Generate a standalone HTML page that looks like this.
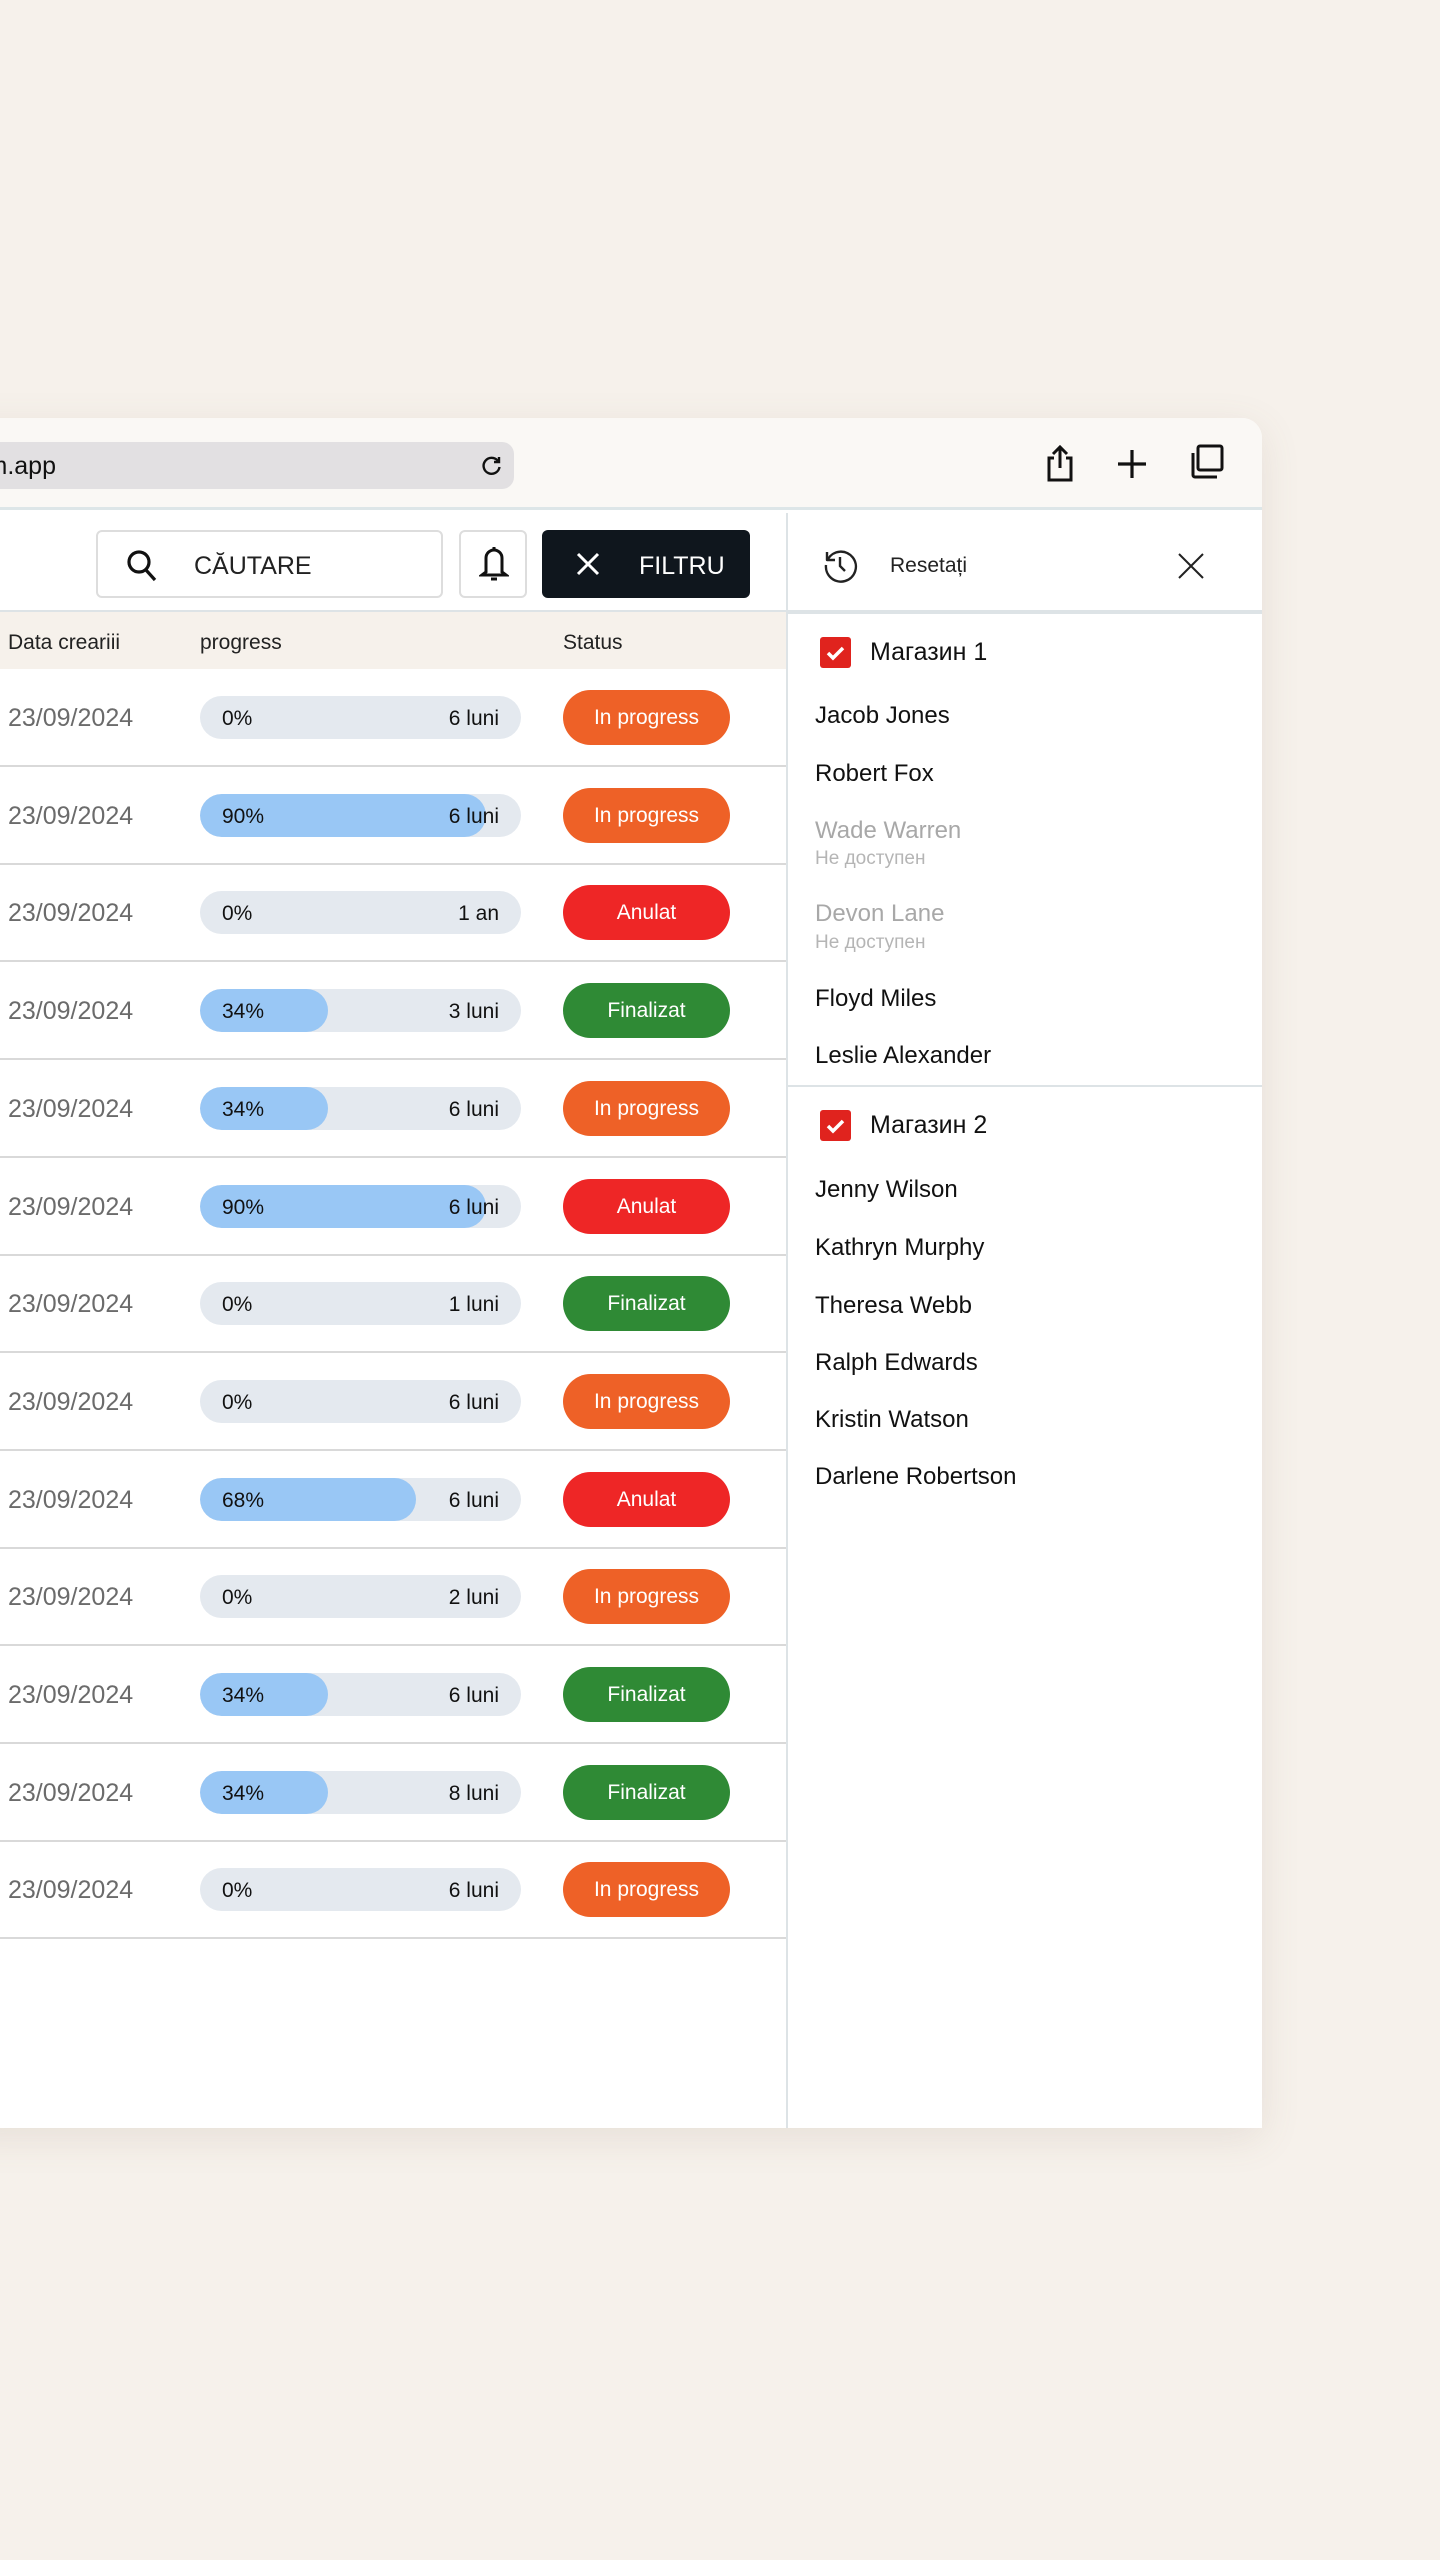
<!DOCTYPE html>
<html><head><meta charset="utf-8"><style>
*{box-sizing:border-box;margin:0;padding:0}
body{width:1440px;height:2560px;background:#f6f1eb;font-family:"Liberation Sans",sans-serif;position:relative;overflow:hidden;color:#111}
.win{position:absolute;left:-40px;top:418px;width:1302px;height:1710px;background:#fff;border-radius:0 20px 0 0;box-shadow:0 10px 40px rgba(120,100,80,.12);overflow:hidden}
.tb{position:absolute;left:0;top:0;width:100%;height:92px;background:#faf8f5;border-bottom:3px solid #dde6e8}
.url{position:absolute;left:0;top:24px;width:554px;height:47px;background:#e2e0e2;border-radius:12px}
.url span{position:absolute;left:14px;top:10px;font-size:25px;color:#111}
.abs{position:absolute}
.search{left:136px;top:112px;width:347px;height:68px;border:2px solid #ddd;border-radius:6px}
.bell{left:499px;top:112px;width:68px;height:68px;border:2px solid #ddd;border-radius:6px}
.filt{left:582px;top:112px;width:208px;height:68px;background:#0f161d;border-radius:6px;color:#fff}
.vline{left:826px;top:95px;width:2px;height:1620px;background:#dde3e6}
.hline{height:2px;background:#dde3e6}
.thead{left:0;top:194px;width:826px;height:57px;background:#f6f1eb;font-size:21px;color:#222}
.row{position:absolute;left:0;width:826px;height:98px;border-bottom:2px solid #d9d9d9}
.date{position:absolute;left:48px;top:35px;font-size:25px;color:#6b6b6b}
.bar{position:absolute;left:240px;top:27px;width:321px;height:43px;background:#e4e9ef;border-radius:22px;overflow:hidden}
.fill{position:absolute;left:0;top:0;height:43px;background:#99c7f5;border-radius:22px}
.bar .p{position:absolute;left:22px;top:11px;font-size:21px;color:#111}
.bar .d{position:absolute;right:22px;top:11px;font-size:21px;color:#111}
.pill{position:absolute;left:603px;top:21px;width:167px;height:55px;border-radius:28px;color:#fff;font-size:21px;text-align:center;line-height:55px}
.o{background:#ee6127}.r{background:#ee2626}.g{background:#2f8a35}
.nm{position:absolute;left:815px;font-size:24px;color:#111}
.dis{color:#a8a8a8}.sub{position:absolute;left:815px;font-size:19px;color:#b5b5b5}
.cb{position:absolute;left:820px;width:31px;height:31px;background:#e0231e;border-radius:3px}
.cb svg{display:block}
</style></head><body>
<div class="win">
 <div class="tb">
  <div class="url"><span>ym.app</span>
   <svg class="abs" style="left:520px;top:12px" width="24" height="24" viewBox="0 0 24 24" fill="none" stroke="#111" stroke-width="2.4"><path d="M18 7a8 8 0 1 0 1.5 6"/><path d="M19 3v5h-5" fill="none"/></svg>
  </div>
  <svg class="abs" style="left:1084px;top:26px" width="32" height="40" viewBox="0 0 32 40" fill="none" stroke="#111" stroke-width="3"><path d="M10 14H5v22h22V14h-5"/><path d="M16 24V3M9 10l7-7 7 7"/></svg>
  <svg class="abs" style="left:1156px;top:30px" width="32" height="32" viewBox="0 0 32 32" stroke="#111" stroke-width="3.2"><path d="M16 2v28M2 16h28"/></svg>
  <svg class="abs" style="left:1228px;top:26px" width="36" height="36" viewBox="0 0 36 36" fill="none" stroke="#111" stroke-width="3"><rect x="10" y="2" width="24" height="24" rx="2"/><path d="M5 9v22a2 2 0 0 0 2 2h22"/></svg>
 </div>
 <div class="abs search">
  <svg class="abs" style="left:28px;top:17px" width="34" height="34" viewBox="0 0 34 34" fill="none" stroke="#111" stroke-width="3.2"><circle cx="13" cy="13" r="10"/><path d="M20 21l9 10"/></svg>
  <span class="abs" style="left:96px;top:20px;font-size:25px;color:#222">CĂUTARE</span>
 </div>
 <div class="abs bell">
  <svg class="abs" style="left:18px;top:14px" width="30" height="38" viewBox="0 0 30 38" fill="none" stroke="#111" stroke-width="3"><path d="M15 4a8 8 0 0 0-8 8v14l-4 3h24l-4-3V12a8 8 0 0 0-8-8z"/><path d="M15 1v3M12 33h6"/></svg>
 </div>
 <div class="abs filt">
  <svg class="abs" style="left:34px;top:22px" width="24" height="24" viewBox="0 0 24 24" stroke="#fff" stroke-width="3"><path d="M2 2l20 20M22 2L2 22"/></svg>
  <span class="abs" style="left:97px;top:22px;font-size:25px">FILTRU</span>
 </div>
 <div class="abs vline"></div>
 <div class="abs hline" style="left:0;top:192px;width:1302px"></div>
 <div class="abs thead">
  <span class="abs" style="left:48px;top:19px">Data creariii</span>
  <span class="abs" style="left:240px;top:19px">progress</span>
  <span class="abs" style="left:603px;top:19px">Status</span>
 </div>
 <div style="position:absolute;left:0;top:251px">
  <div class="row" style="top:0"><span class="date">23/09/2024</span><div class="bar"><span class="p">0%</span><span class="d">6 luni</span></div><div class="pill o">In progress</div></div>
  <div class="row" style="top:97.7px"><span class="date">23/09/2024</span><div class="bar"><div class="fill" style="width:286px"></div><span class="p">90%</span><span class="d">6 luni</span></div><div class="pill o">In progress</div></div>
  <div class="row" style="top:195.4px"><span class="date">23/09/2024</span><div class="bar"><span class="p">0%</span><span class="d">1 an</span></div><div class="pill r">Anulat</div></div>
  <div class="row" style="top:293.1px"><span class="date">23/09/2024</span><div class="bar"><div class="fill" style="width:128px"></div><span class="p">34%</span><span class="d">3 luni</span></div><div class="pill g">Finalizat</div></div>
  <div class="row" style="top:390.8px"><span class="date">23/09/2024</span><div class="bar"><div class="fill" style="width:128px"></div><span class="p">34%</span><span class="d">6 luni</span></div><div class="pill o">In progress</div></div>
  <div class="row" style="top:488.5px"><span class="date">23/09/2024</span><div class="bar"><div class="fill" style="width:286px"></div><span class="p">90%</span><span class="d">6 luni</span></div><div class="pill r">Anulat</div></div>
  <div class="row" style="top:586.2px"><span class="date">23/09/2024</span><div class="bar"><span class="p">0%</span><span class="d">1 luni</span></div><div class="pill g">Finalizat</div></div>
  <div class="row" style="top:683.9px"><span class="date">23/09/2024</span><div class="bar"><span class="p">0%</span><span class="d">6 luni</span></div><div class="pill o">In progress</div></div>
  <div class="row" style="top:781.6px"><span class="date">23/09/2024</span><div class="bar"><div class="fill" style="width:216px"></div><span class="p">68%</span><span class="d">6 luni</span></div><div class="pill r">Anulat</div></div>
  <div class="row" style="top:879.3px"><span class="date">23/09/2024</span><div class="bar"><span class="p">0%</span><span class="d">2 luni</span></div><div class="pill o">In progress</div></div>
  <div class="row" style="top:977px"><span class="date">23/09/2024</span><div class="bar"><div class="fill" style="width:128px"></div><span class="p">34%</span><span class="d">6 luni</span></div><div class="pill g">Finalizat</div></div>
  <div class="row" style="top:1074.7px"><span class="date">23/09/2024</span><div class="bar"><div class="fill" style="width:128px"></div><span class="p">34%</span><span class="d">8 luni</span></div><div class="pill g">Finalizat</div></div>
  <div class="row" style="top:1172.4px"><span class="date">23/09/2024</span><div class="bar"><span class="p">0%</span><span class="d">6 luni</span></div><div class="pill o">In progress</div></div>
 </div>
 <svg class="abs" style="left:863px;top:129px" width="36" height="36" viewBox="0 0 36 36" fill="none" stroke="#222" stroke-width="2.4"><path d="M5 12A15 15 0 1 1 3 18"/><path d="M4 5v8h8" stroke-linejoin="round"/><path d="M17 10v9l5 5"/></svg>
 <span class="abs" style="left:930px;top:136px;font-size:21px;color:#222">Resetați</span>
 <svg class="abs" style="left:1218px;top:135px" width="26" height="26" viewBox="0 0 26 26" stroke="#222" stroke-width="2"><path d="M1 1l24 24M25 1L1 25"/></svg>
</div>
<div class="abs hline" style="left:787px;top:612px;width:475px"></div>
<div class="cb" style="top:637px"><svg width="31" height="31" viewBox="0 0 31 31" fill="none" stroke="#fff" stroke-width="3.5"><path d="M8 16l5 5 10-10"/></svg></div>
<span class="nm" style="left:870px;top:638px;font-size:25px">Магазин 1</span>
<span class="nm" style="top:702px">Jacob Jones</span>
<span class="nm" style="top:760px">Robert Fox</span>
<span class="nm dis" style="top:817px">Wade Warren</span>
<span class="sub" style="top:848px">Не доступен</span>
<span class="nm dis" style="top:900px">Devon Lane</span>
<span class="sub" style="top:932px">Не доступен</span>
<span class="nm" style="top:985px">Floyd Miles</span>
<span class="nm" style="top:1042px">Leslie Alexander</span>
<div class="abs hline" style="left:787px;top:1085px;width:475px"></div>
<div class="cb" style="top:1110px"><svg width="31" height="31" viewBox="0 0 31 31" fill="none" stroke="#fff" stroke-width="3.5"><path d="M8 16l5 5 10-10"/></svg></div>
<span class="nm" style="left:870px;top:1111px;font-size:25px">Магазин 2</span>
<span class="nm" style="top:1176px">Jenny Wilson</span>
<span class="nm" style="top:1234px">Kathryn Murphy</span>
<span class="nm" style="top:1292px">Theresa Webb</span>
<span class="nm" style="top:1349px">Ralph Edwards</span>
<span class="nm" style="top:1406px">Kristin Watson</span>
<span class="nm" style="top:1463px">Darlene Robertson</span>
</body></html>
